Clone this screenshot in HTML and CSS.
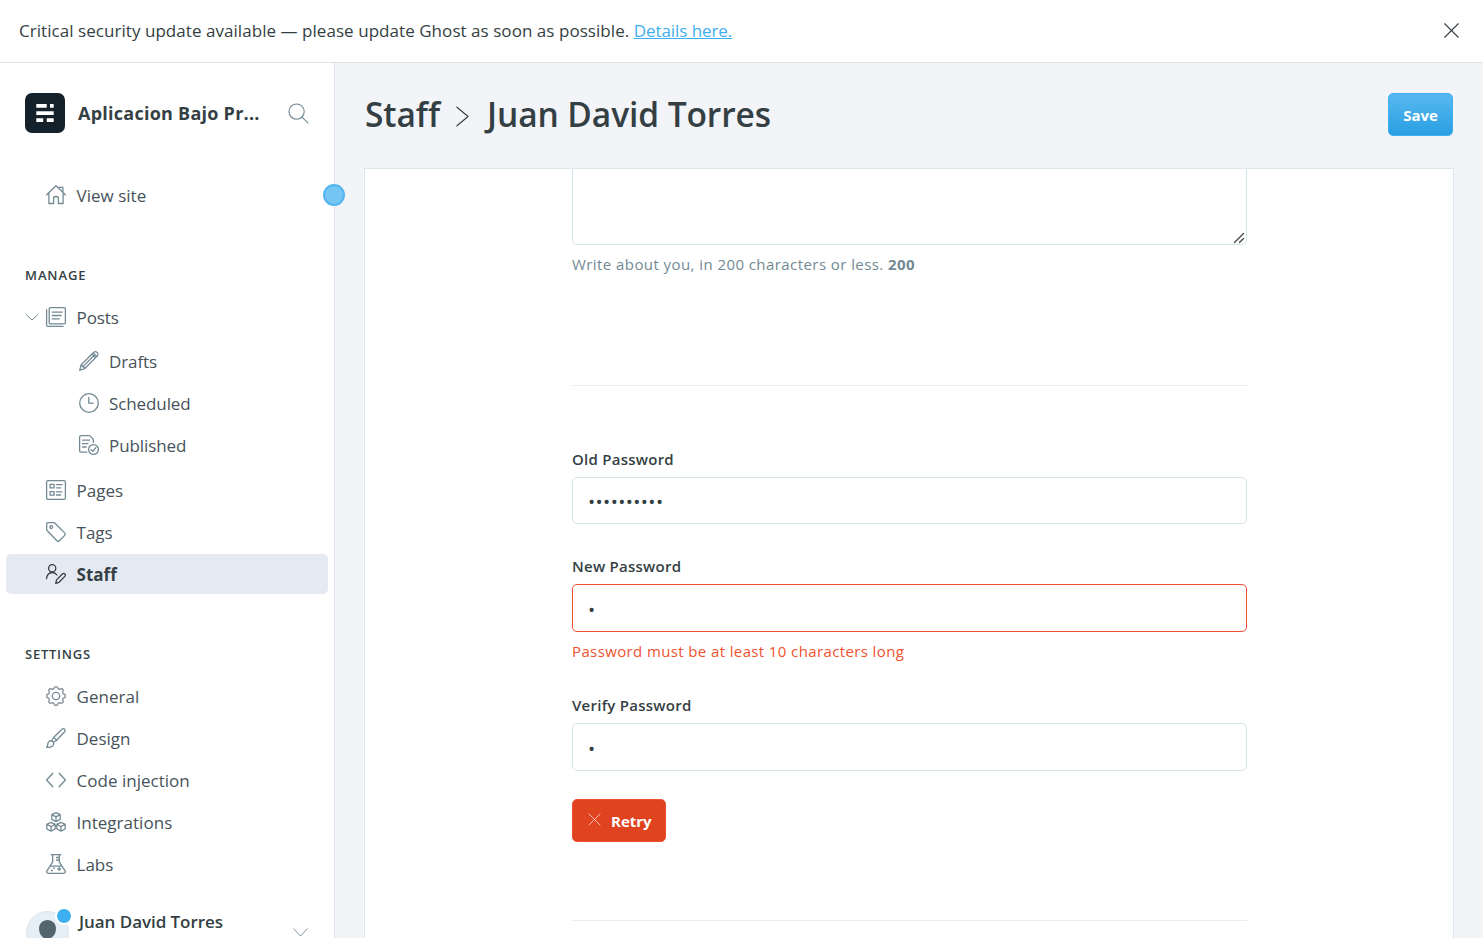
FILE: index.html
```html
<!DOCTYPE html>
<html lang="en">
<head>
<meta charset="utf-8">
<title>Staff - Juan David Torres</title>
<link rel="stylesheet" href="styles.css">
</head>
<body>
<div class="app">
  <aside class="alert">
    <div class="alert-text"><span>Critical security update available — please update Ghost as soon as possible.</span> <a class="alert-link" href="#">Details here.</a></div>
    <svg class="alert-close" viewBox="0 0 16 16"><path d="M.8.8l14.4 14.4M15.2.8L.8 15.2"/></svg>
  </aside>
  <div class="viewport">
    <nav class="sidebar">
      <header class="site">
        <svg class="site-logo" viewBox="0 0 40 40"><rect width="40" height="40" rx="7"/><path d="M11.300 11.100h10.400v3.700H11.300zM25 11.100h3.700v3.700H25zM11.300 18.200h17.400v3.700H11.300zM11.300 25.200h6.900v3.700h-6.900zM21.700 25.200h7v3.700h-7z"/></svg>
        <span class="site-name">Aplicacion Bajo Pr...</span>
        <svg class="site-search" viewBox="0 0 22 22"><circle cx="9" cy="9" r="8"/><path d="M14.700 14.700l6.200 6.200"/></svg>
      </header>
      <ul class="nav">
        <li class="row"><svg class="icon" viewBox="0 0 20 20"><path d="M.6 9.800L10 .8l9.400 9M2.900 8.600v9.900h4.700v-5.300c0-1.100.9-1.700 2.400-1.700s2.400.6 2.400 1.700v5.300h4.700V8.600M12.900 2.400h4v5"/></svg><span>View site</span></li>
      </ul>
      <h5 class="heading">MANAGE</h5>
      <ul class="nav">
        <li class="row row-posts"><svg class="chevron" viewBox="0 0 12 7"><path d="M.5.8L6 6 11.500.8"/></svg><svg class="icon" viewBox="0 0 20 20"><rect x="3.200" y=".6" width="16.200" height="16.200" rx="1.200"/><path d="M.6 2.600v15.200c0 .9.7 1.600 1.600 1.600H17M6.200 5.200h10M6.200 8.500h9M6.200 11.800h7"/></svg><span>Posts</span></li>
        <li class="row sub"><svg class="icon" viewBox="0 0 20 20"><path d="M.7 19.300l1.500-5.600L14.500 1.500c1.100-1.100 2.500-1.100 3.600-.1s1.100 2.500 0 3.700L5.800 17.500zM2.200 13.700l3.600 3.800M4 15.600L15.300 4.300M12.900 3.100l3.700 3.700M14.200 1.900l3.700 3.700"/></svg><span>Drafts</span></li>
        <li class="row sub"><svg class="icon" viewBox="0 0 20 20"><circle cx="10" cy="10" r="9.300"/><path d="M9.800 4.500v5.700h4.500"/></svg><span>Scheduled</span></li>
        <li class="row sub row-last"><svg class="icon" viewBox="0 0 20 20"><path d="M7.800 17.200H2c-.8 0-1.400-.6-1.400-1.400V2C.6 1.200 1.200.6 2 .6h8.700l3.600 3.600v3.200M3.500 5.100h7M3.500 8.600h5.500M3.500 12h3.700"/><circle cx="14.500" cy="14.500" r="4.900"/><path d="M12.100 14.700l1.700 1.700 3-3.800"/></svg><span>Published</span></li>
        <li class="row"><svg class="icon" viewBox="0 0 20 20"><rect x=".6" y=".6" width="18.800" height="18.800" rx="1.300"/><path d="M4.100 4.300h4v3.600h-4zM4.100 11.600h4v3.600h-4zM10.500 4.600H16M10.500 7.800h4.200M10.500 11.800H16M10.500 15h4.200"/></svg><span>Pages</span></li>
        <li class="row"><svg class="icon" viewBox="0 0 20 20"><path d="M.7 1.900v5.500c0 .6.2 1 .6 1.400l9.600 9.900c.8.800 1.700.8 2.500 0l5.300-5.300c.8-.8.800-1.700 0-2.500L9 1.300C8.600.9 8.200.7 7.700.7H1.900C1.200.7.700 1.200.7 1.900z"/><circle cx="5.200" cy="5.100" r="1.400"/></svg><span>Tags</span></li>
        <li class="row active"><svg class="icon" viewBox="0 0 20 20"><circle cx="6.200" cy="4.200" r="3.600"/><path d="M.6 14.600c0-3.500 2.400-6.100 5.600-6.100 2 0 3.700.9 4.700 2.500M9.700 19.300l.9-3.400 5.700-5.900c.8-.8 1.800-.8 2.500-.2.800.8.800 1.800 0 2.600l-5.800 5.900z"/></svg><span>Staff</span></li>
      </ul>
      <h5 class="heading heading-settings">SETTINGS</h5>
      <ul class="nav">
        <li class="row"><svg class="icon" viewBox="0 0 20 20"><circle cx="10" cy="10" r="3.700"/><path d="M8.200 1.800c.5-1.600 3.100-1.600 3.600 0 .4 1.400 1.500 1.800 2.700 1.200 1.600-.8 3.300.9 2.500 2.500-.6 1.200-.2 2.300 1.200 2.700 1.600.5 1.600 3.100 0 3.600-1.400.4-1.800 1.500-1.200 2.700.8 1.600-.9 3.300-2.500 2.500-1.200-.6-2.300-.2-2.700 1.200-.5 1.600-3.100 1.600-3.600 0-.4-1.400-1.500-1.800-2.700-1.200-1.600.8-3.300-.9-2.500-2.500.6-1.200.2-2.300-1.200-2.700-1.600-.5-1.600-3.100 0-3.600C3.200 7.800 3.600 6.700 3 5.500 2.200 3.900 3.900 2.200 5.500 3c1.200.6 2.300.2 2.700-1.200z"/></svg><span>General</span></li>
        <li class="row"><svg class="icon" viewBox="0 0 20 20"><path d="M.6 19.300c1.100-1 1-2.300 1.200-3.500.4-2.200 1.700-3.300 3.300-3 1.700.3 2.700 1.600 2.500 3.200-.4 2.800-3.400 3.600-7 3.300zM5.900 12.500l1.600-3L16 1.300c.8-.8 1.800-.9 2.600-.2.800.8.700 1.800 0 2.700L10.400 12.500l-2.900 1.700M7.500 9.500c1.300.5 2.300 1.500 2.900 3"/></svg><span>Design</span></li>
        <li class="row"><svg class="icon" viewBox="0 0 20 20"><path d="M6.800 3.200L.6 10l6.200 6.800M13.200 3.200l6.200 6.800-6.200 6.800"/></svg><span>Code injection</span></li>
        <li class="row"><svg class="icon" viewBox="0 0 20 20"><path d="M10 .7l4.200 2v4.700L10 9.600 5.800 7.400V2.700zM5.800 2.700L10 4.900l4.200-2.200M10 4.900v4.700M5 10.300l4.200 2V17L5 19.200.8 17v-4.700zM.8 12.300L5 14.500l4.200-2.200M5 14.500v4.700M15 10.300l4.200 2V17L15 19.200 10.800 17v-4.700zM10.800 12.300l4.200 2.200 4.200-2.200M15 14.500v4.700"/></svg><span>Integrations</span></li>
        <li class="row"><svg class="icon" viewBox="0 0 20 20"><path d="M5 .6h10M6.700.6v7.200L1 16.800c-.8 1.300-.2 2.500 1.400 2.500h15.200c1.600 0 2.200-1.200 1.400-2.500l-5.700-9V.6M4.200 12.100h11.600M10.500 3.500h2.700M10.500 6h2.700M13.200 13.500v3M11.700 15h3M7.400 14.200h1M5.400 16.500h1"/></svg><span>Labs</span></li>
      </ul>
      <footer class="user">
        <div class="avatar"><svg class="avatar-art" viewBox="0 0 43 43"><circle class="avatar-bg" cx="21.500" cy="21.500" r="21"/><path class="avatar-head" d="M21.500 9c4.900 0 8.500 3.800 8.500 8.800 0 5.200-3.600 10.200-8.500 10.200S13 23 13 17.800C13 12.800 16.600 9 21.500 9z"/></svg><span class="badge"></span></div>
        <span class="user-name">Juan David Torres</span>
        <svg class="user-chevron" viewBox="0 0 16 10"><path d="M.6.900L8 9 15.400.9"/></svg>
      </footer>
      <span class="handle"></span>
    </nav>
    <main class="main">
      <header class="top">
        <h2 class="title"><span class="crumb">Staff</span><svg class="title-sep" viewBox="0 0 14 22"><path d="M1 1l12 10L1 21"/></svg><span>Juan David Torres</span></h2>
        <button class="save">Save</button>
      </header>
      <section class="card">
        <form class="form">
          <div class="bio"><svg class="grip" viewBox="0 0 10 10"><path d="M.5 9.500l9-9M5.500 9.500l4-4"/></svg></div>
          <p class="hint">Write about you, in 200 characters or less. <b>200</b></p>
          <hr class="rule">
          <label class="label label-old">Old Password</label>
          <input class="field field-old" type="password" value="aaaaaaaaaa">
          <label class="label">New Password</label>
          <input class="field field-error" type="password" value="a">
          <p class="error">Password must be at least 10 characters long</p>
          <label class="label label-verify">Verify Password</label>
          <input class="field" type="password" value="a">
          <button class="retry" type="button"><svg class="retry-icon" viewBox="0 0 14 14"><path d="M1 1l12 12M13 1L1 13"/></svg>Retry</button>
          <hr class="rule rule-end">
        </form>
      </section>
    </main>
  </div>
</div>
</body>
</html>
```

FILE: styles.css
```css
* { box-sizing: border-box; }
body {
  margin: 0;
  overflow: hidden;
  color: #343f44;
  background: #fff;
  font-family: "Open Sans", "Noto Sans", sans-serif;
  font-size: 17px;
}
ul, p, h2, h5 { margin: 0; padding: 0; list-style: none; }
svg { display: block; flex: none; fill: none; stroke: currentColor; stroke-linecap: round; stroke-linejoin: round; overflow: visible; }
.app { display: flex; flex-direction: column; height: 938px; overflow: hidden; }

.alert { flex: none; display: flex; align-items: center; justify-content: space-between; height: 63px; padding: 0 24px 2px 19px; border-bottom: 1px solid #dfe1e3; }
.alert-text { white-space: nowrap; letter-spacing: 0.05px; }
.alert-link { color: #3eb0ef; text-decoration: underline; letter-spacing: -0.07px; }
.alert-close { width: 15px; height: 15px; stroke-width: 1.2; }

.viewport { flex: 1; display: flex; min-height: 0; }
.sidebar { position: relative; flex: none; display: flex; flex-direction: column; width: 335px; height: 875px; border-right: 1px solid #dfe5ee; }
.site { flex: none; display: flex; align-items: center; height: 40px; margin: 30px 25px 42px 25px; }
.site-logo { width: 40px; height: 40px; fill: #15212a; stroke: none; }
.site-logo path { fill: #fff; }
.site-name { flex: 1; margin-left: 13px; font-size: 18px; font-weight: 700; letter-spacing: 0.25px; white-space: nowrap; }
.site-search { width: 21px; height: 21px; color: #738a94; stroke-width: 1.2; }
.nav { flex: none; display: flex; flex-direction: column; gap: 2px; padding: 0 6px; }
.row { flex: none; display: flex; align-items: center; gap: 10.5px; height: 40px; padding-left: 40px; border-radius: 5px; color: #47535a; letter-spacing: 0.02px; white-space: nowrap; }
.icon { width: 20px; height: 20px; color: #738a94; stroke-width: 1.3; }
.row-posts { margin-bottom: 2px; padding-left: 20px; gap: 8px; }
.row-posts .icon + span { margin-left: 2.5px; }
.row-posts span, .sub span { letter-spacing: -0.1px; }
.chevron { width: 12px; height: 7px; color: #738a94; }
.sub { padding-left: 73px; gap: 10px; }
.row-last { margin-bottom: 3px; }
.active { background: #e5eaf2; color: #343f44; font-weight: 700; }
.active .icon { color: #343f44; }
.heading { flex: none; height: 18px; margin: 51px 0 13px; padding-left: 25px; font-size: 13px; line-height: 18px; font-weight: 600; letter-spacing: 0.9px; }
.heading-settings { letter-spacing: 0.75px; }
.user { flex: none; display: flex; align-items: flex-start; margin-top: 27px; padding: 0 26px; }
.avatar { position: relative; flex: none; width: 43px; height: 43px; }
.avatar-art { width: 43px; height: 43px; stroke: none; }
.avatar-bg { fill: #e5eff5; stroke: #dbe3ec; }
.avatar-head { fill: #54666d; }
.badge { position: absolute; top: -4px; left: 29px; width: 18px; height: 18px; border: 2px solid #fff; border-radius: 50%; background: #3eb0ef; }
.user-name { flex: 1; margin-left: 10px; font-weight: 600; line-height: 22px; letter-spacing: -0.05px; }
.user-chevron { width: 15px; height: 9px; margin-top: 17px; color: #738a94; }
.handle { position: absolute; z-index: 2; left: 323px; top: 121px; width: 22px; height: 22px; border: 2px solid #52b6f1; border-radius: 50%; background: #75c6f3; }

.main { flex: 1; display: flex; flex-direction: column; min-width: 0; padding: 0 30px; background: #f2f4f8; }
.top { flex: none; display: flex; align-items: flex-start; justify-content: space-between; height: 105px; padding-top: 29px; }
.title { display: flex; align-items: center; font-size: 33.5px; font-weight: 600; line-height: 44px; letter-spacing: -0.08px; }
.crumb { width: 74px; }
.title-sep { width: 13px; height: 21px; margin: 4px 18px 0 17px; stroke-width: 1.2; }
.save { height: 43px; width: 65px; margin-top: 1px; padding: 0; border: 1px solid #3eb0ef; border-radius: 5px; background: linear-gradient(#57b8f0, #299fe3); color: #fff; font: 700 15px "Open Sans", sans-serif; }
.card { flex: 1; margin: 0 -1px; padding: 0 206px 0 207px; border: 1px solid #dce8ee; border-bottom: 0; background: #fff; overflow: hidden; }
.form { display: flex; flex-direction: column; }
.bio { position: relative; height: 76px; border: 1px solid #d5e3eb; border-top: 0; border-radius: 0 0 5px 5px; }
.grip { position: absolute; right: 2px; bottom: 1px; width: 10px; height: 10px; color: #444; stroke-width: 1.3; }
.hint { margin-top: 8px; color: #738a94; font-size: 15px; line-height: 22px; letter-spacing: 0.43px; }
.rule { width: 100%; height: 1px; margin: 110px 0 0; border: 0; background: #e5eff5; }
.label { height: 22px; margin: 31px 0 7px; font-size: 15px; font-weight: 600; line-height: 22px; letter-spacing: 0.25px; }
.label-old { margin-top: 62px; }
.label-verify { margin-top: 32px; }
.field { height: 48px; padding: 3px 15px 0; border: 1px solid #d5e3eb; border-radius: 5px; outline: 0; color: #343f44; background: #fff; font: 19px "Open Sans", sans-serif; letter-spacing: 0.4px; }
.field-old { height: 47px; }
.field-error { border-color: #f05230; }
.error { margin-top: 8px; color: #f05230; font-size: 15px; line-height: 22px; letter-spacing: 0.38px; }
.retry { display: flex; align-items: center; align-self: flex-start; width: 94px; height: 43px; margin-top: 28px; padding: 0 14px 0 15px; border: 1px solid #f05230; border-radius: 5px; background: #e04320; color: #fff; font: 700 15px "Open Sans", sans-serif; }
.retry-icon { width: 13px; height: 13px; margin: -2px 10px 0 0; opacity: 0.7; }
.rule-end { margin-top: 78px; }
```
